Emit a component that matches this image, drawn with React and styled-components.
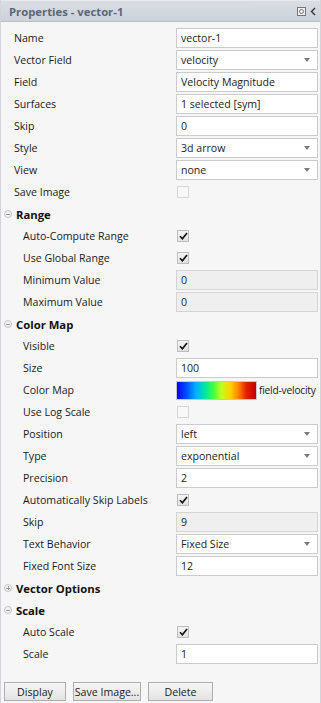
import React from 'react';
import styled, { createGlobalStyle } from 'styled-components';

const GlobalStyle = createGlobalStyle`
  html, body {
    margin: 0;
    padding: 0;
    background: #ffffff;
  }
  body {
    font-family: 'Open Sans', 'Noto Sans', sans-serif;
    font-size: 10.6px;
    color: #1a1a1a;
  }
`;

const Panel = styled.div`
  width: 321px;
  height: 703px;
  box-sizing: border-box;
  background: #f6f6f6;
  border-left: 1px solid #d2d4d8;
  border-right: 1px solid #d2d4d8;
  display: flex;
  flex-direction: column;
  overflow: hidden;
`;

const TitleBar = styled.div`
  height: 22px;
  flex: 0 0 22px;
  display: flex;
  align-items: center;
  padding: 0 4px 0 8px;
  background: linear-gradient(#dadee4, #cdd1d9);
  border-top: 1px solid #e6e8ec;
  border-bottom: 1px solid #b9bec7;
  box-sizing: border-box;
`;

const Title = styled.div`
  flex: 1;
  font-weight: 700;
  font-size: 11.3px;
  color: #5c6778;
`;

const TitleIcons = styled.div`
  display: flex;
  align-items: center;
  gap: 4px;
  color: #444;
`;

const Body = styled.div`
  flex: 1;
  display: flex;
  flex-direction: column;
  padding-top: 5px;
`;

const Row = styled.div`
  display: grid;
  grid-template-columns: ${({ indent }) => (indent ? '153px' : '162px')} 1fr;
  align-items: center;
  height: 22px;
  padding-left: ${({ indent }) => (indent ? '22px' : '13px')};
  padding-right: 2px;
`;

const Label = styled.div`
  white-space: nowrap;
`;

const Field = styled.div`
  height: 20px;
  box-sizing: border-box;
  border: 1px solid ${({ disabled }) => (disabled ? '#d4d4d4' : '#cbcbcb')};
  background: ${({ disabled }) => (disabled ? '#efefef' : '#ffffff')};
  display: flex;
  align-items: center;
  padding: 0 4px;
  color: #222;
`;

const Arrow = styled.span`
  margin-left: auto;
  width: 0;
  height: 0;
  border-left: 3.5px solid transparent;
  border-right: 3.5px solid transparent;
  border-top: 4px solid #7a7a7a;
  margin-right: 3px;
`;

const Check = styled.div`
  width: 12px;
  height: 12px;
  box-sizing: border-box;
  margin-left: 1px;
  border: 1px solid ${({ disabled }) => (disabled ? '#d6d6d6' : '#bdbdbd')};
  background: ${({ disabled }) => (disabled ? '#f8f8f8' : 'linear-gradient(#f4f4f4, #e2e2e2)')};
  display: flex;
  align-items: center;
  justify-content: center;
`;

const SectionHead = styled.div`
  display: flex;
  align-items: center;
  height: 22px;
  padding-left: 3px;
  gap: 4px;
  font-weight: 700;
  font-size: 11.3px;
  color: #111;
`;

const Toggle = styled.span`
  width: 6px;
  height: 6px;
  border-radius: 50%;
  border: 1px solid #c4c4c4;
  background: #f2f2f2;
  position: relative;
  flex: 0 0 auto;
  &::before {
    content: '';
    position: absolute;
    left: 1px;
    top: 2.5px;
    width: 4px;
    height: 1px;
    background: #999;
  }
  &::after {
    content: '';
    display: ${({ open }) => (open ? 'none' : 'block')};
    position: absolute;
    left: 2.5px;
    top: 1px;
    width: 1px;
    height: 4px;
    background: #999;
  }
`;

const MapWrap = styled.div`
  display: flex;
  align-items: center;
  gap: 2px;
  margin-right: -3px;
`;

const Gradient = styled.div`
  width: 81px;
  height: 19px;
  flex: 0 0 auto;
  box-sizing: border-box;
  border: 1px solid #c8c8c8;
  background: linear-gradient(
    90deg,
    #0000ff 0%,
    #0050ff 12%,
    #00b0ff 24%,
    #00e8a0 36%,
    #40ff40 46%,
    #c0ff20 56%,
    #ffd000 68%,
    #ff8000 78%,
    #e02000 88%,
    #c00000 100%
  );
`;

const MapName = styled.span`
  white-space: nowrap;
  font-size: 10.2px;
  letter-spacing: -0.2px;
`;

const ButtonBar = styled.div`
  display: flex;
  gap: 7px;
  padding: 0 0 2px 3px;
  margin-top: auto;
`;

const Button = styled.div`
  height: 19px;
  width: ${({ w }) => w}px;
  box-sizing: border-box;
  border: 1px solid #adadad;
  background: linear-gradient(#f6f6f6, #e4e4e4);
  display: flex;
  align-items: center;
  justify-content: center;
  white-space: nowrap;
`;

const CheckMark = () => (
  <svg width="9" height="8" viewBox="0 0 9 8">
    <path d="M1 4.2 L3.4 6.8 L8 1" fill="none" stroke="#111" strokeWidth="1.6" />
  </svg>
);

const Text = ({ label, value, indent, disabled }) => (
  <Row indent={indent}>
    <Label>{label}</Label>
    <Field disabled={disabled}>{value}</Field>
  </Row>
);

const Select = ({ label, value, indent }) => (
  <Row indent={indent}>
    <Label>{label}</Label>
    <Field>
      {value}
      <Arrow />
    </Field>
  </Row>
);

const Box = ({ label, checked, indent }) => (
  <Row indent={indent}>
    <Label>{label}</Label>
    <Check disabled={!checked}>{checked && <CheckMark />}</Check>
  </Row>
);

const Section = ({ title, open }) => (
  <SectionHead>
    <Toggle open={open} />
    {title}
  </SectionHead>
);

export default function App() {
  return (
    <>
      <GlobalStyle />
      <Panel>
        <TitleBar>
          <Title>Properties - vector-1</Title>
          <TitleIcons>
            <svg width="9" height="9" viewBox="0 0 9 9">
              <rect x="0.5" y="0.5" width="8" height="8" fill="#eee" stroke="#777" />
              <circle cx="4.5" cy="4.5" r="2" fill="none" stroke="#777" />
            </svg>
            <svg width="6" height="9" viewBox="0 0 6 9">
              <path d="M5 1 L1.5 4.5 L5 8" fill="none" stroke="#333" strokeWidth="1.4" />
            </svg>
          </TitleIcons>
        </TitleBar>
        <Body>
          <Text label="Name" value="vector-1" />
          <Select label="Vector Field" value="velocity" />
          <Text label="Field" value="Velocity Magnitude" />
          <Text label="Surfaces" value="1 selected [sym]" />
          <Text label="Skip" value="0" />
          <Select label="Style" value="3d arrow" />
          <Select label="View" value="none" />
          <Box label="Save Image" />

          <Section title="Range" open />
          <Box indent label="Auto-Compute Range" checked />
          <Box indent label="Use Global Range" checked />
          <Text indent label="Minimum Value" value="0" disabled />
          <Text indent label="Maximum Value" value="0" disabled />

          <Section title="Color Map" open />
          <Box indent label="Visible" checked />
          <Text indent label="Size" value="100" />
          <Row indent>
            <Label>Color Map</Label>
            <MapWrap>
              <Gradient />
              <MapName>field-velocity</MapName>
            </MapWrap>
          </Row>
          <Box indent label="Use Log Scale" />
          <Select indent label="Position" value="left" />
          <Select indent label="Type" value="exponential" />
          <Text indent label="Precision" value="2" />
          <Box indent label="Automatically Skip Labels" checked />
          <Text indent label="Skip" value="9" disabled />
          <Select indent label="Text Behavior" value="Fixed Size" />
          <Text indent label="Fixed Font Size" value="12" />

          <Section title="Vector Options" />
          <Section title="Scale" open />
          <Box indent label="Auto Scale" checked />
          <Text indent label="Scale" value="1" />

          <ButtonBar>
            <Button w={62}>Display</Button>
            <Button w={68}>Save Image...</Button>
            <Button w={65}>Delete</Button>
          </ButtonBar>
        </Body>
      </Panel>
    </>
  );
}
